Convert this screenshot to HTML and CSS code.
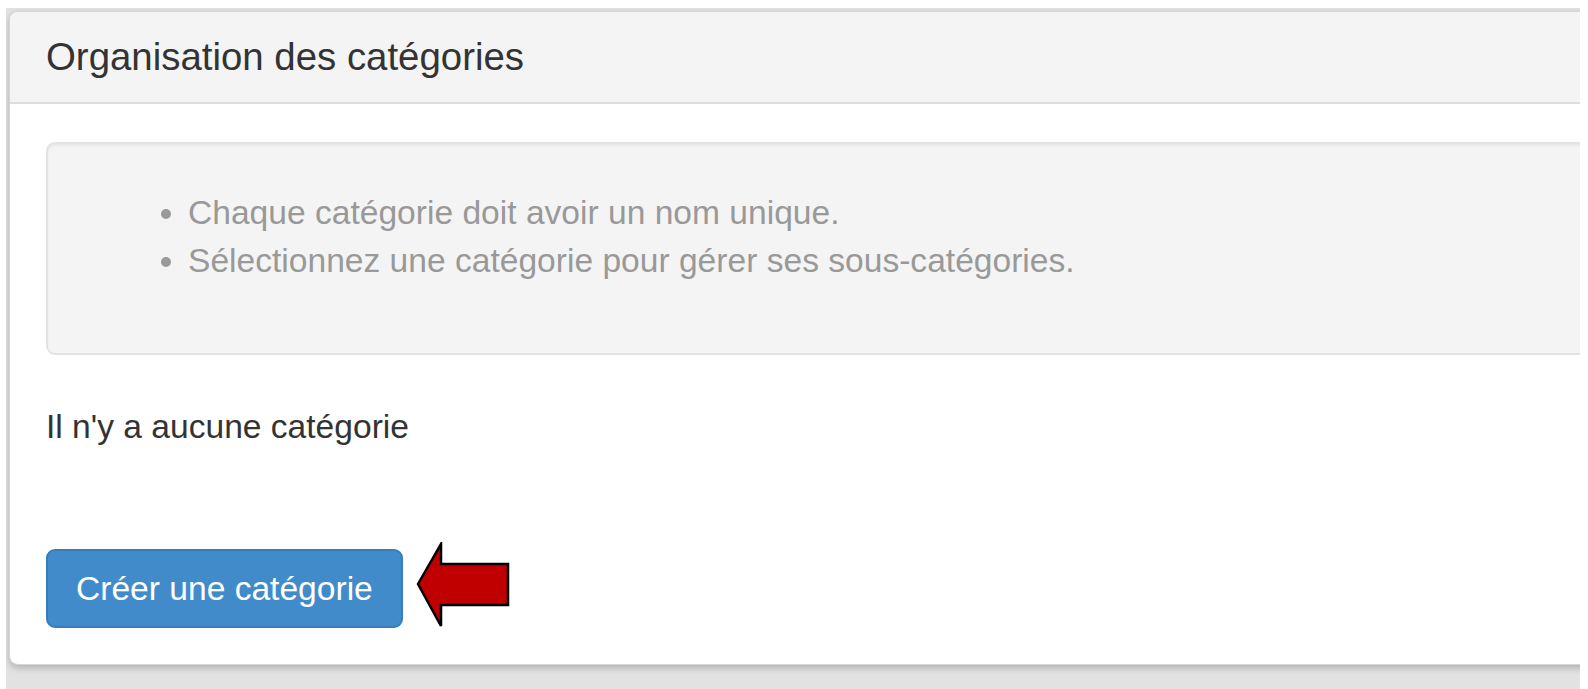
FILE: index.html
```html
<!DOCTYPE html>
<html lang="fr">
<head>
<meta charset="utf-8">
<title>Organisation des catégories</title>
<link rel="stylesheet" href="styles.css">
</head>
<body>
<div class="screen">
  <div class="panel">
    <div class="panel-heading">
      <h3 class="panel-title">Organisation des catégories</h3>
    </div>
    <div class="panel-body">
      <div class="well">
        <ul class="hints">
          <li>Chaque catégorie doit avoir un nom unique.</li>
          <li>Sélectionnez une catégorie pour gérer ses sous-catégories.</li>
        </ul>
      </div>
      <p class="empty">Il n'y a aucune catégorie</p>
      <div class="actions">
        <button class="btn-primary" type="button">Créer une catégorie</button>
        <svg class="arrow" width="97" height="86" viewBox="0 0 97 86" aria-hidden="true">
          <polygon points="2,42 25,2 25,22 92,22 92,63 25,63 25,84" fill="#c00000" stroke="#000" stroke-width="2.5" stroke-linejoin="miter"/>
        </svg>
      </div>
    </div>
  </div>
</div>
</body>
</html>
```
FILE: styles.css
```css
html, body {
  margin: 0;
  padding: 0;
  background: #ffffff;
}

body {
  font-family: "Liberation Sans", Arial, sans-serif;
  color: #333333;
}

.screen {
  margin: 8px 0 0 6px;
  width: 1574px;
  height: 681px;
  box-sizing: border-box;
  padding: 3px 0 0 3px;
  background: #e2e2e2;
  overflow: hidden;
}

.panel {
  width: 1620px;
  background: #ffffff;
  border: 1px solid #d6d6d6;
  border-radius: 9px;
  box-shadow: 0 3px 7px rgba(0, 0, 0, 0.22);
}

.panel-heading {
  background: #f4f4f4;
  padding: 24px 36px;
  border-bottom: 2px solid #dddddd;
  border-radius: 8px 8px 0 0;
}

.panel-title {
  margin: 0;
  font-size: 38.4px;
  line-height: 42px;
  font-weight: normal;
  color: #333333;
}

.panel-body {
  padding: 38px 36px 36px 36px;
}

.well {
  background: #f4f4f4;
  border: 2px solid #e3e3e3;
  border-radius: 9px;
  padding: 45px;
  margin-bottom: 48px;
  box-shadow: inset 0 2px 2px rgba(0, 0, 0, 0.05);
}

.hints {
  margin: 0 0 24px 0;
  padding-left: 95px;
  font-size: 33.6px;
  line-height: 47.6px;
  color: #999999;
}

.empty {
  margin: 0 0 24px 0;
  font-size: 33.6px;
  line-height: 47.6px;
  color: #333333;
}

.actions {
  display: flex;
  align-items: flex-start;
  gap: 13px;
  margin-top: 98px;
}

.btn-primary {
  font-family: "Liberation Sans", Arial, sans-serif;
  font-size: 33.6px;
  line-height: 47.6px;
  padding: 14px 28px;
  color: #ffffff;
  background: #428bca;
  border: 2px solid #357ebd;
  border-radius: 9px;
}

.arrow {
  display: block;
  margin-top: -7px;
}
```
